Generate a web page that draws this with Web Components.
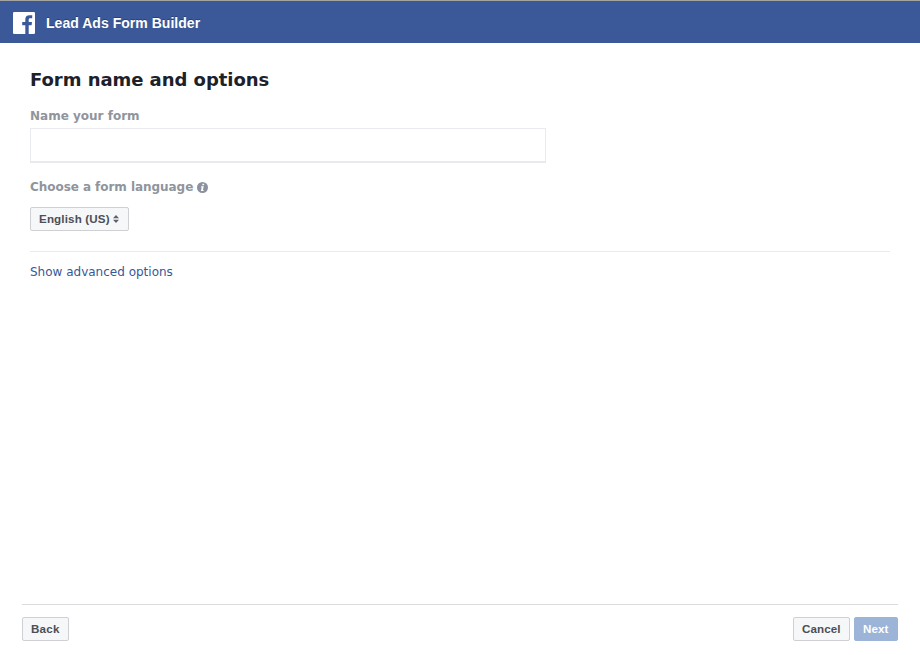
<!DOCTYPE html>
<html lang="en">
<head>
<meta charset="utf-8">
<title>Lead Ads Form Builder</title>
<style>
html, body { margin: 0; height: 100%; background: #fff; overflow: hidden; }
</style>
</head>
<body>
<form-builder></form-builder>
<script>
function define(name, html) {
  const template = document.createElement('template');
  template.innerHTML = html;
  customElements.define(name, class extends HTMLElement {
    constructor() {
      super();
      this.attachShadow({ mode: 'open' }).append(template.content.cloneNode(true));
    }
  });
}

define('builder-header', `
<style>
:host { display: flex; align-items: center; box-sizing: border-box; height: 43px; padding: 2px 13px 0; gap: 11px;
  border-top: 1px solid #a3a3a0; background: #3b5998; color: #fff;
  font: bold 14px/20px "Liberation Sans", Arial, sans-serif; letter-spacing: .03px; text-shadow: 0 -1px 0 rgba(0,0,0,.3); }
svg { display: block; flex: none; }
</style>
<svg width="22" height="22" viewBox="0 0 22 22"><path fill="#fff" d="M1.2 0H20.8Q22 0 22 1.2V20.8Q22 22 20.8 22H15.7V13.3H18.6L19 10H15.7V8C15.7 6.7 16.2 6.3 17.4 6.3H19.2V3.2H16.6C13.7 3.2 12.3 4.8 12.3 7.4V10H9.2V13.3H12.3V22H1.2Q0 22 0 20.8V1.2Q0 0 1.2 0Z"/></svg>
<span><slot></slot></span>`);

define('field-label', `
<style>
:host { display: flex; align-items: center; height: 16px; gap: 4px; color: #90949c;
  font: bold 12px/16px "DejaVu Sans", sans-serif; letter-spacing: var(--ls, 0); white-space: nowrap; }
</style>
<slot></slot>`);

define('info-icon', `
<style>:host { display: block; width: 11px; height: 11px; } svg { display: block; }</style>
<svg width="11" height="11" viewBox="0 0 11 11"><circle cx="5.5" cy="5.5" r="5.5" fill="#8b919e"/><path fill="#fff" d="M5.5 1.8H7.3L7 3.3H5.2ZM4.1 4.2H6.8L5.9 8H6.7L6.5 9H3.9L4.7 5.2H3.9Z"/></svg>`);

define('text-field', `
<style>
:host { display: block; width: 516px; height: 35px; }
input { display: block; box-sizing: border-box; width: 100%; height: 100%; margin: 0; padding: 0 8px;
  border: 1px solid #e9eaed; border-bottom-width: 2px; border-radius: 0; background: #fff; outline: 0; }
</style>
<input type="text" aria-label="Name your form">`);

define('ui-button', `
<style>
:host { display: inline-block; }
button { display: flex; align-items: center; gap: 3px; box-sizing: border-box;
  width: var(--w); height: 24px; margin: 0; padding: 0 0 0 8px; border: 1px solid #ced0d4; border-radius: 2px;
  background: #f6f7f9; color: #4b4f56; white-space: nowrap;
  font: bold 11.6px/22px "Liberation Sans", Arial, sans-serif; letter-spacing: var(--ls, .1px); }
:host([primary]) button { border-color: #9cb4d8; background: #9cb4d8; color: #fff; }
</style>
<button type="button"><slot></slot></button>`);

define('sort-arrows', `
<style>:host { display: block; } svg { display: block; }</style>
<svg width="6" height="8" viewBox="0 0 6 8"><path fill="#5b606b" d="M0 3.3 3 0 6 3.3ZM0 4.7H6L3 8Z"/></svg>`);

define('form-panel', `
<style>
:host { display: flex; flex-direction: column; align-items: flex-start; flex: 1; padding: 25px 30px 0; }
h1 { margin: 0 0 16px; color: #1d2129; font: bold 18px/24px "DejaVu Sans", sans-serif; letter-spacing: -.04px; white-space: nowrap; }
text-field { margin: 4px 0 16px; }
ui-button { margin: 12px 0 20px; }
hr { width: 100%; height: 1px; margin: 0 0 12px; border: 0; background: #e9eaed; }
a { color: #365899; font: 12px/16px "DejaVu Sans", sans-serif; text-decoration: none; white-space: nowrap; }
</style>
<h1>Form name and options</h1>
<field-label>Name your form</field-label>
<text-field></text-field>
<field-label style="--ls:-.05px">Choose a form language<info-icon></info-icon></field-label>
<ui-button style="--w:99px;--ls:.15px"><span>English (US)</span><sort-arrows></sort-arrows></ui-button>
<hr>
<a href="#">Show advanced options</a>`);

define('action-bar', `
<style>
:host { display: flex; box-sizing: border-box; height: 51px; margin: 0 22px; padding-top: 12px; gap: 4px; border-top: 1px solid #dadbdd; }
.space { flex: 1; }
</style>
<ui-button style="--w:47px;--ls:.25px">Back</ui-button>
<div class="space"></div>
<ui-button style="--w:57px">Cancel</ui-button>
<ui-button primary style="--w:44px">Next</ui-button>`);

define('form-builder', `
<style>:host { display: flex; flex-direction: column; height: 655px; }</style>
<builder-header>Lead Ads Form Builder</builder-header>
<form-panel></form-panel>
<action-bar></action-bar>`);
</script>
</body>
</html>
